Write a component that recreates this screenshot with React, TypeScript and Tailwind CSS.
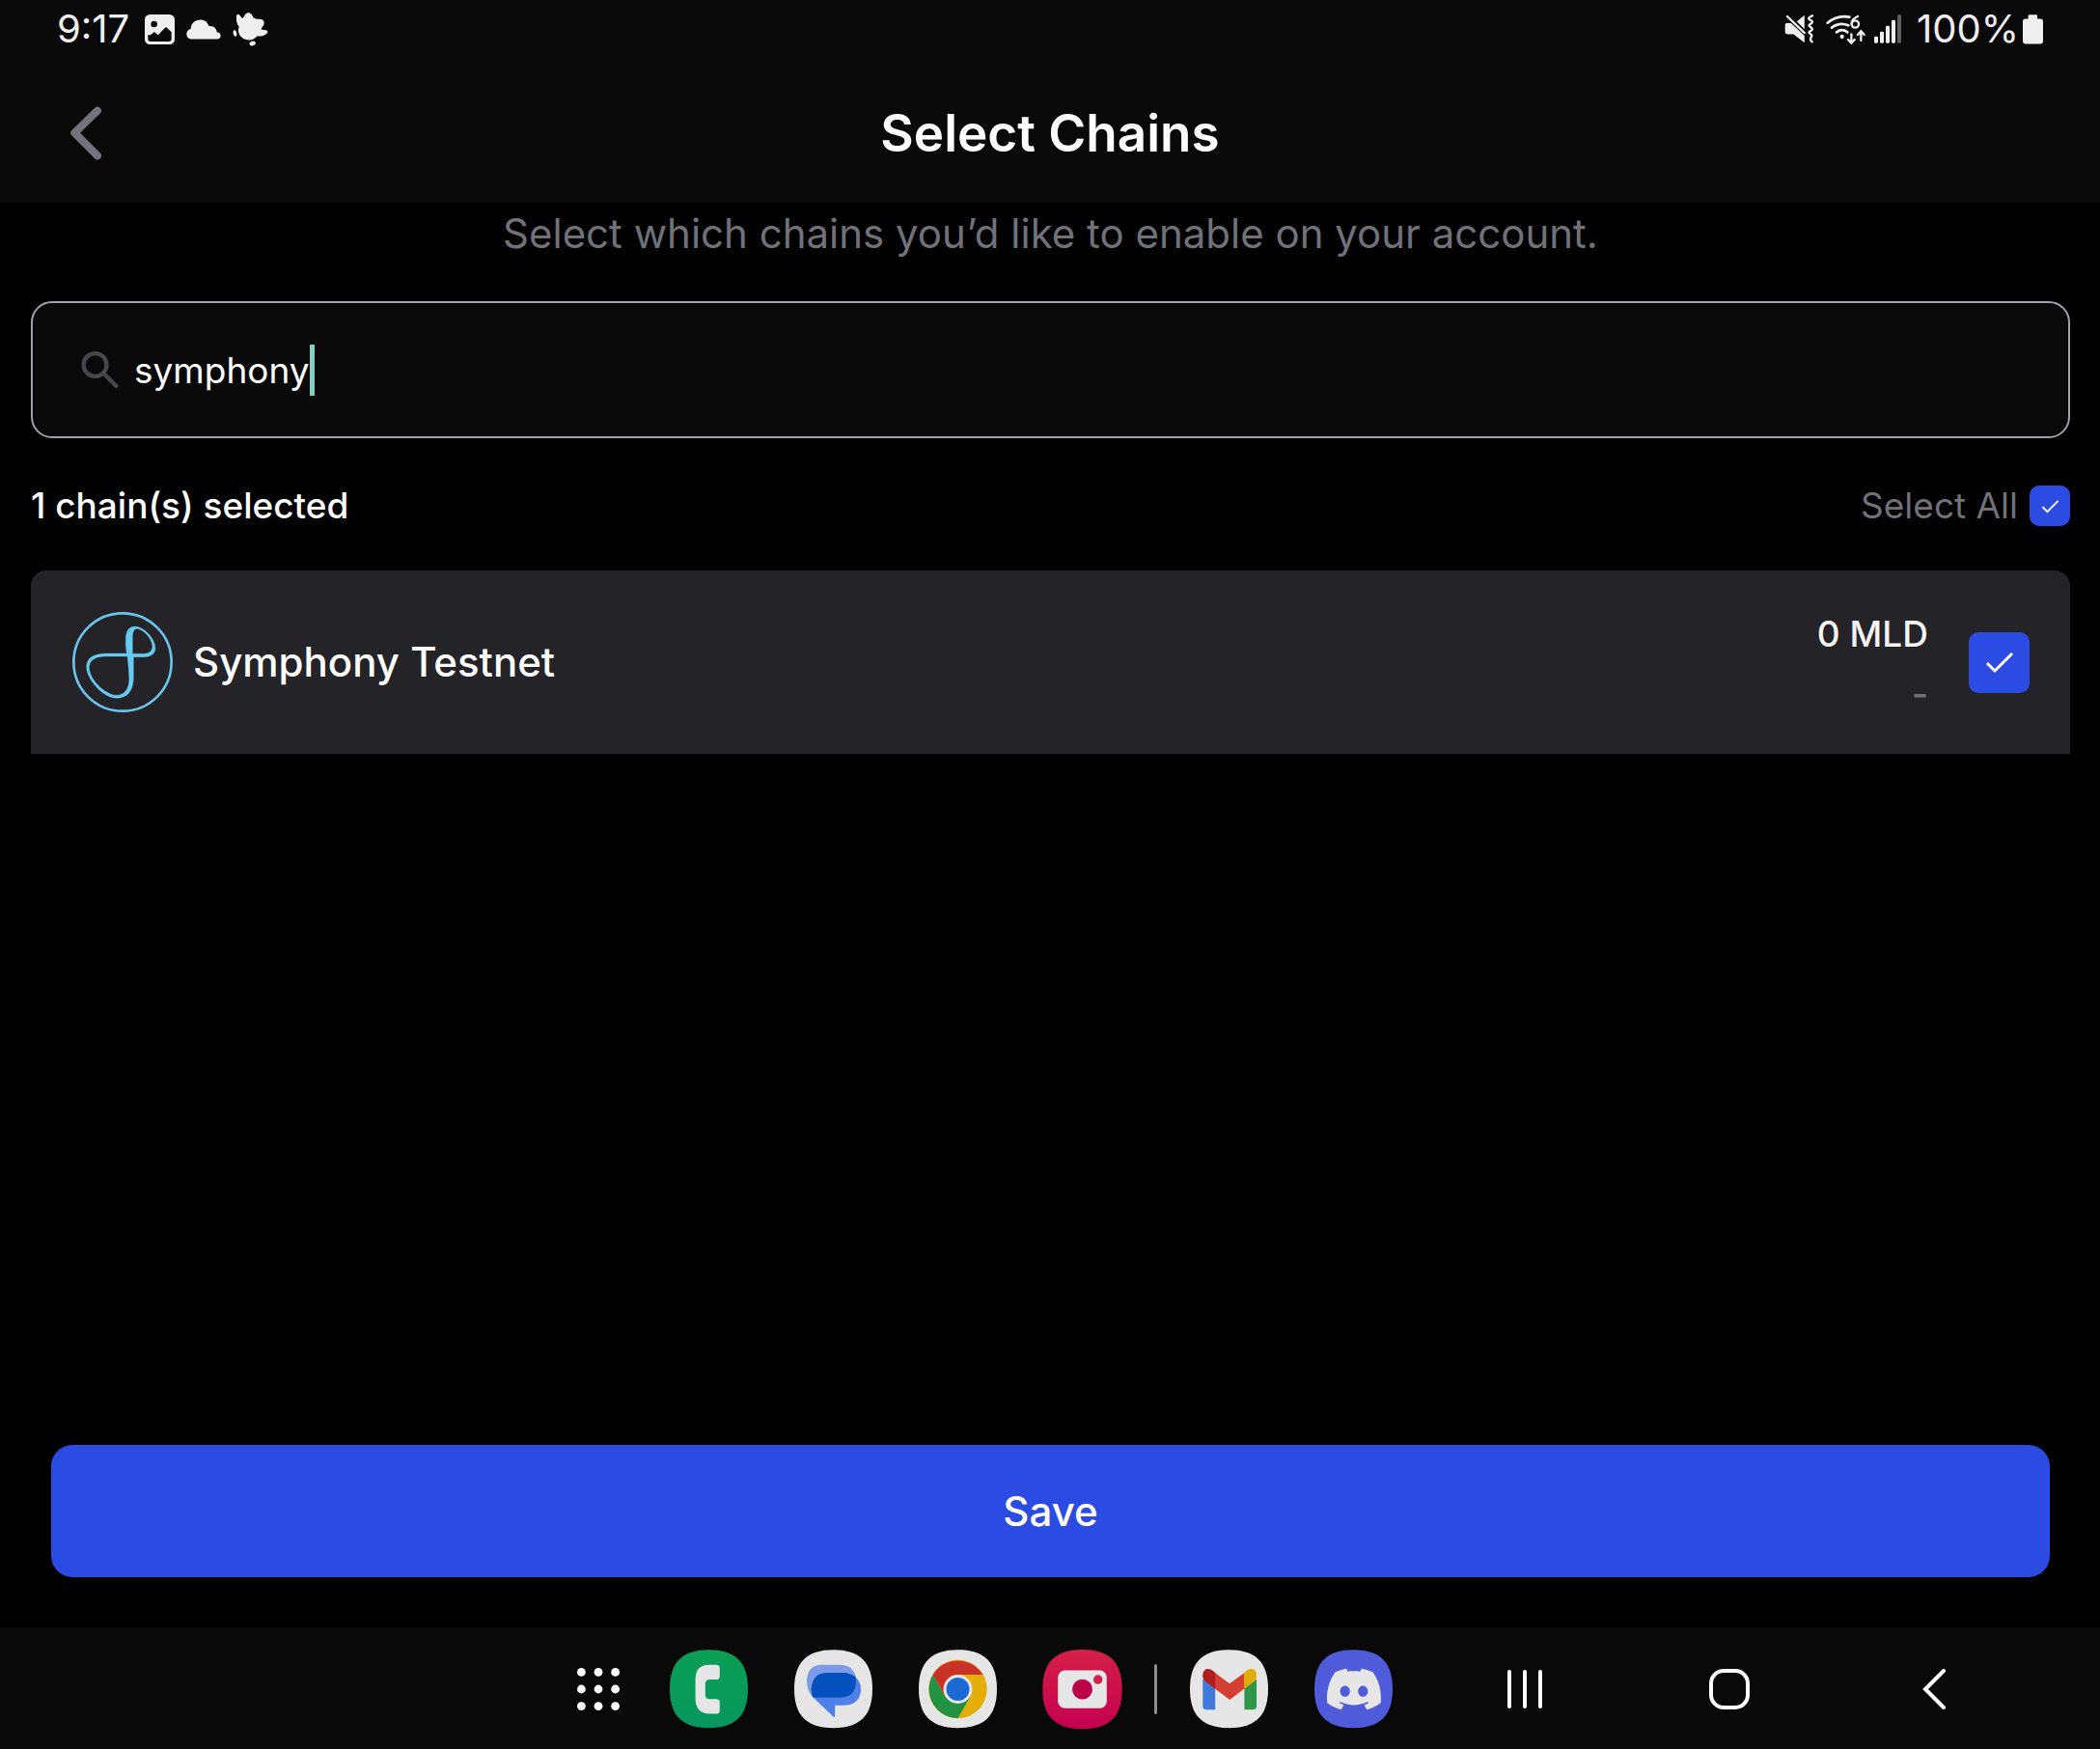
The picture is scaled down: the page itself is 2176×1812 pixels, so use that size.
import React, { useState } from "react";
import { SiDiscord } from "react-icons/si";

const SQUIRCLE = "M122 0C205 0 244 39 244 122S205 244 122 244 0 205 0 122 39 0 122 0Z";

function ImageIcon() {
  return (
    <svg viewBox="330 44 93 93" className="size-[31px]" aria-hidden="true">
      <path
        fill="#efefef"
        fillRule="evenodd"
        d="M346 44h61a16 16 0 0 1 16 16v61a16 16 0 0 1-16 16h-61a16 16 0 0 1-16-16V60a16 16 0 0 1 16-16ZM359 64a10 10 0 1 0 0 20 10 10 0 0 0 0-20ZM340 108v12a8 8 0 0 0 8 8h57a8 8 0 0 0 8-8V99l-14-14q-3-2-6 0l-20 21q-2 2-4 0l-6-6q-3-2-6 0l-7 6q-2 1-2 2Z"
      />
    </svg>
  );
}

function CloudIcon() {
  return (
    <svg viewBox="463 56 109 63" className="h-[21px] w-9" aria-hidden="true">
      <path
        fill="#efefef"
        d="M480 118C469 118 464 110 464 102 464 93 470 87 477 86 478 68 490 57 507 57 521 57 530 65 534 77 548 75 558 84 559 96 567 97 571 102 571 107 571 113 567 118 560 118Z"
      />
    </svg>
  );
}

function SplashIcon() {
  return (
    <svg viewBox="604 38 111 106" className="h-[35px] w-[37px]" aria-hidden="true">
      <g fill="#efefef">
        <path d="M616 47C618 42 623 43 626 47L634 56C637 54 639 52 641 48 644 41 650 38 656 39 663 40 665 48 669 54 675 60 684 58 693 59 702 61 704 68 701 76 699 82 694 86 693 91 699 93 706 92 712 95 715 98 713 103 708 106 700 112 689 113 680 112 675 119 667 124 655 124 638 124 624 113 622 98 621 92 622 88 624 83 616 74 614 58 616 47Z" />
        <ellipse cx="611" cy="103" rx="5.500" ry="10" transform="rotate(-10 611 103)" />
        <ellipse cx="666" cy="135" rx="10" ry="7" transform="rotate(-14 666 135)" />
      </g>
    </svg>
  );
}

function MuteVibrateIcon() {
  return (
    <svg viewBox="62 46 92 91" className="h-[30px] w-[31px]" aria-hidden="true">
      <path fill="#efefef" d="M124 48v44L100 68ZM66 73h16l42 40v22L90 108H72q-9 0-9-9V82q0-7 3-9Z" />
      <path d="M70 52 124 104" fill="none" stroke="#efefef" strokeWidth="7" strokeLinecap="round" />
      <path d="M149 50C134 57 134 60 145 65 152 69 148 73 141 77 135 81 142 85 146 88 152 93 146 96 141 99 135 103 142 107 146 110 152 115 134 121 148 132" fill="none" stroke="#efefef" strokeWidth="7" strokeLinejoin="round" strokeLinecap="round" />
    </svg>
  );
}

function WifiIcon() {
  return (
    <svg viewBox="194 46 126 93" className="h-[31px] w-[42px]" aria-hidden="true">
      <g fill="none" stroke="#efefef" strokeWidth="8" strokeLinecap="round">
        <path d="M199 72Q230 46 267 54" />
        <path d="M212 87Q236 68 264 80" />
        <path d="M227 101Q244 88 261 101" />
        <path d="M293 52Q274 60 274 75" strokeWidth="7" />
        <circle cx="285" cy="76" r="11" strokeWidth="7" />
        <path d="M273 107v27M263 124l10 11 10-11M303 127v-27M293 109l10-11 10 11" strokeWidth="7" />
      </g>
      <circle cx="244" cy="115" r="6.500" fill="#efefef" />
    </svg>
  );
}

function SignalIcon() {
  return (
    <svg viewBox="345 46 84 90" className="h-[30px] w-7" aria-hidden="true">
      <g fill="#efefef">
        <rect x="345" y="114" width="12" height="21" rx="4" />
        <rect x="363" y="99" width="12" height="36" rx="4" />
        <rect x="381" y="81" width="12" height="54" rx="4" />
        <rect x="399" y="63" width="12" height="72" rx="4" />
        <rect x="417" y="47" width="12" height="88" rx="4" fill="#5f5f5f" />
      </g>
    </svg>
  );
}

function BatteryIcon() {
  return (
    <svg viewBox="798 45 64 93" className="h-[31px] w-[21px]" aria-hidden="true">
      <path fill="#efefef" d="M819 45h21q4 0 4 4v9h10q8 0 8 8v62q0 9-9 9h-46q-9 0-9-9V66q0-8 8-8h9v-9q0-4 4-4Z" />
    </svg>
  );
}

function SymphonyLogo() {
  return (
    <svg viewBox="12 15 318 318" className="size-[106px]" aria-hidden="true">
      <circle cx="171" cy="174" r="152" fill="none" stroke="#6cc3ea" strokeWidth="8" />
      <path
        fill="#66caf1"
        stroke="#66caf1"
        strokeWidth="1"
        fillRule="evenodd"
        d="M181 100C182 75 192 63 210 63 240 64 274 104 273 132 272 150 255 158 238 158L205 158 205 215C206 260 190 286 150 286 110 284 58 226 59 188 60 155 90 147 125 147L184 147C181 130 180 115 181 100ZM202 148 202 98C202 78 208 70 216 70 238 74 262 100 264 126 262 142 250 148 235 148ZM186 156 125 156C95 156 70 162 67 188 66 225 112 272 150 277 185 277 194 245 191 215 190 190 188 175 186 156Z"
      />
    </svg>
  );
}

function PhoneApp() {
  return (
    <svg viewBox="0 0 244 246" className="h-[82px] w-[81px]" aria-hidden="true">
      <defs>
        <linearGradient id="phone-bg" x1="0" y1="0" x2="0" y2="1">
          <stop offset="0" stopColor="#0a9e55" />
          <stop offset="1" stopColor="#07965f" />
        </linearGradient>
      </defs>
      <path d={SQUIRCLE} fill="url(#phone-bg)" />
      <path fill="#e6e6e6" d="M123 47h22q11 0 11 11v24q0 11-11 11h-20q-14 0-14 14v33q0 14 14 14h20q11 0 11 11v24q0 11-11 11h-22Q80 197 80 153V93Q80 47 123 47Z" />
    </svg>
  );
}

function MessagesApp() {
  return (
    <svg viewBox="0 0 244 246" className="h-[82px] w-[81px]" aria-hidden="true">
      <path d={SQUIRCLE} fill="#e6e6e6" />
      <path fill="#4f7fe8" d="M102 72h55a51 51 0 0 1 0 101H127v34q0 6-5 2L68 158Q52 142 52 120 55 72 102 72Z" />
      <path fill="#7c9ce8" d="M88 47h54q44 0 52 44 0 58-50 58H58Q39 127 39 97 41 47 88 47Z" />
      <path fill="#4f7fe8" d="M191 86Q208 100 208 122 208 165 165 173H127L90 149h58Q196 143 191 86Z" />
      <path fill="#0450bd" d="M103 72h51q20 0 38 14 6 63-49 63H59Q53 139 53 122 57 72 103 72Z" />
    </svg>
  );
}

function ChromeApp() {
  return (
    <svg viewBox="0 0 244 246" className="h-[82px] w-[81px]" aria-hidden="true">
      <path d={SQUIRCLE} fill="#e6e6e6" />
      <circle cx="122" cy="123" r="91" fill="#e5ae0a" />
      <path fill="#cb3227" d="M44 78A91 91 0 0 1 200 78H122L83 146Z" />
      <path fill="#249243" d="M44 78A91 91 0 0 0 122 214L161 146H83Z" />
      <circle cx="122" cy="123" r="45" fill="#e6e6e6" />
      <circle cx="122" cy="123" r="36" fill="#1b6ad6" />
    </svg>
  );
}

function CameraApp() {
  return (
    <svg viewBox="0 0 244 246" className="h-[83px] w-[83px]" aria-hidden="true">
      <defs>
        <linearGradient id="camera-bg" x1="0" y1="0" x2="0" y2="1">
          <stop offset="0" stopColor="#d42049" />
          <stop offset="1" stopColor="#c40050" />
        </linearGradient>
      </defs>
      <path d={SQUIRCLE} fill="url(#camera-bg)" />
      <rect x="47" y="64" width="150" height="116" rx="21" fill="#e6e6e6" />
      <circle cx="122" cy="122" r="31" fill="#bb0048" />
      <circle cx="170" cy="92" r="14" fill="#d02148" />
    </svg>
  );
}

function GmailApp() {
  return (
    <svg viewBox="0 0 244 246" className="h-[82px] w-[81px]" aria-hidden="true">
      <path d={SQUIRCLE} fill="#e6e6e6" />
      <path fill="#3f7adb" d="M40 92 79 118v69H51q-11 0-11-11Z" />
      <path fill="#2f974a" d="M208 92 170 118v69h27q11 0 11-11Z" />
      <path fill="#d53f33" d="M77 71 124 106 171 71v50L124 156 77 121Z" />
      <path fill="#b01f1e" d="M79 72v50L48 99Q40 93 40 84V78Q42 60 57 60 65 60 71 65Z" />
      <path fill="#e1ac06" d="M169 72v50L200 99Q208 93 208 84V78Q206 60 191 60 183 60 177 65Z" />
    </svg>
  );
}

function DiscordApp() {
  return (
    <span className="grid place-items-center">
      <svg viewBox="0 0 244 246" className="col-start-1 row-start-1 h-[82px] w-[81px]" aria-hidden="true">
        <path d={SQUIRCLE} fill="#505bd9" />
      </svg>
      <SiDiscord className="col-start-1 row-start-1 size-14 text-[#e6e6e6]" aria-hidden="true" />
    </span>
  );
}

type CheckProps = {
  id: string;
  large?: boolean;
  checked: boolean;
  onChange: (next: boolean) => void;
};

function Check({ id, large, checked, onChange }: CheckProps) {
  return (
    <span className="grid place-items-center">
      <input
        id={id}
        type="checkbox"
        checked={checked}
        onChange={(e) => onChange(e.target.checked)}
        className={
          (large ? "size-[63px]" : "size-[42px]") +
          " peer col-start-1 row-start-1 appearance-none rounded-[10px] border-2 border-[#2c4be2] checked:bg-[#2c4be2]"
        }
      />
      <svg
        viewBox="0 0 30 24"
        className={
          (large ? "h-6 w-[30px]" : "h-[15px] w-[19px]") +
          " pointer-events-none invisible col-start-1 row-start-1 peer-checked:visible"
        }
        aria-hidden="true"
      >
        <path d="M2 13 10 21 28 3" fill="none" stroke="#fff" strokeWidth="3" />
      </svg>
    </span>
  );
}

const dock = [
  { name: "Phone", icon: <PhoneApp /> },
  { name: "Messages", icon: <MessagesApp /> },
  { name: "Chrome", icon: <ChromeApp /> },
  { name: "Camera", icon: <CameraApp /> },
];

const recent = [
  { name: "Gmail", icon: <GmailApp /> },
  { name: "Discord", icon: <DiscordApp /> },
];

function DockButton({ name, children }: { name: string; children: React.ReactNode }) {
  return (
    <button type="button" aria-label={name} className="flex w-[129px] items-center justify-center">
      {children}
    </button>
  );
}

export default function App() {
  const [query, setQuery] = useState("symphony");
  const [selected, setSelected] = useState(true);

  return (
    <div className="flex min-h-screen flex-col bg-black font-[Inter,sans-serif] text-white">
      <header className="bg-[#090909]">
        <div className="flex h-[60px] items-center justify-between px-[59px] text-[40px] leading-[60px] text-[#efefef]">
          <div className="flex items-center">
            <span>9:17</span>
            <span className="ml-4 flex items-center gap-3">
              <ImageIcon />
              <CloudIcon />
              <SplashIcon />
            </span>
          </div>
          <div className="flex items-center">
            <MuteVibrateIcon />
            <span className="ml-3">
              <WifiIcon />
            </span>
            <span className="ml-2">
              <SignalIcon />
            </span>
            <span className="ml-4">100%</span>
            <span className="ml-1">
              <BatteryIcon />
            </span>
          </div>
        </div>
        <div className="grid h-[150px] grid-cols-[1fr_auto_1fr] items-start px-[73px] pt-[46px]">
          <button type="button" aria-label="Back" className="flex h-16 w-10 items-center">
            <svg viewBox="100 330 96 168" className="h-14 w-8" aria-hidden="true">
              <path d="M184 344 113 413 184 484" fill="none" stroke="#71757b" strokeWidth="24" strokeLinecap="round" strokeLinejoin="round" />
            </svg>
          </button>
          <h1 className="text-[53px] leading-[64px] font-semibold">Select Chains</h1>
        </div>
      </header>

      <main className="flex flex-1 flex-col pr-[31px] pl-8">
        <p className="text-center text-[42px] leading-[64px] font-normal text-[#717179]">
          Select which chains you’d like to enable on your account.
        </p>

        <label className="mt-[38px] flex h-[142px] items-center rounded-[22px] border-2 border-[#a1a1aa] bg-[#090909] pl-[50px]">
          <svg viewBox="190 187 118 120" className="h-10 w-[39px]" aria-hidden="true">
            <g fill="none" stroke="#46464b" strokeWidth="13">
              <circle cx="234" cy="232" r="36" />
              <path d="M259 257 304 302" />
            </g>
          </svg>
          <input
            type="text"
            aria-label="Search chains"
            value={query}
            onChange={(e) => setQuery(e.target.value)}
            className="ml-4 h-[60px] [field-sizing:content] bg-transparent text-[37px] caret-[#84cdc4] outline-none"
          />
          <span className="h-[53px] w-[5px] bg-[#84cdc4]" />
        </label>

        <div className="mt-[47px] flex h-[46px] items-center justify-between text-[37px] leading-[46px]">
          <p className="font-medium">{selected ? 1 : 0} chain(s) selected</p>
          <div className="flex items-center gap-3">
            <label htmlFor="select-all" className="text-[#717179]">
              Select All
            </label>
            <Check id="select-all" checked={selected} onChange={setSelected} />
          </div>
        </div>

        <ul className="mt-11">
          <li className="flex h-[190px] items-center rounded-t-2xl bg-[#242428] px-[42px]">
            <SymphonyLogo />
            <label htmlFor="symphony" className="ml-5 text-[42px] leading-[50px] font-medium">
              Symphony Testnet
            </label>
            <div className="ml-auto flex flex-col gap-4 pt-[3px] text-right text-[37px] leading-[46px] font-medium">
              <span className="text-[#f4f4f5]">0 MLD</span>
              <span className="text-[#717179]">-</span>
            </div>
            <span className="ml-[42px]">
              <Check id="symphony" large checked={selected} onChange={setSelected} />
            </span>
          </li>
        </ul>

        <button
          type="button"
          className="mx-[21px] mt-auto mb-[52px] h-[137px] rounded-[22px] bg-[#2c4be2] text-[42px] font-medium"
        >
          Save
        </button>
      </main>

      <nav aria-label="Taskbar" className="flex h-[126px] items-center justify-end bg-[#090909] pt-[2px] pr-[66px]">
        <button type="button" aria-label="All apps" className="flex w-[100px] items-center justify-center">
          <svg viewBox="0 0 130 130" className="size-11" aria-hidden="true">
            <g fill="#fff">
              {[13, 65, 117].map((y) =>
                [13, 65, 117].map((x) => <circle key={`${x}-${y}`} cx={x} cy={y} r="13" />)
              )}
            </g>
          </svg>
        </button>
        {dock.map((app) => (
          <DockButton key={app.name} name={app.name}>
            {app.icon}
          </DockButton>
        ))}
        <span className="mx-[10px] h-[52px] w-[3px] rounded-full bg-[#8f8f8f]" />
        {recent.map((app) => (
          <DockButton key={app.name} name={app.name}>
            {app.icon}
          </DockButton>
        ))}
        <button type="button" aria-label="Recents" className="ml-[7px] flex w-[212px] items-center justify-center">
          <svg viewBox="0 0 38 42" className="h-[42px] w-[38px]" aria-hidden="true">
            <path d="M3 3V39M19 3V39M35 3V39" stroke="#fff" strokeWidth="4" strokeLinecap="round" />
          </svg>
        </button>
        <button type="button" aria-label="Home" className="flex w-[212px] items-center justify-center">
          <svg viewBox="0 0 42 42" className="size-[42px]" aria-hidden="true">
            <rect x="2" y="2" width="38" height="38" rx="13" fill="none" stroke="#fff" strokeWidth="4" />
          </svg>
        </button>
        <button type="button" aria-label="Back" className="flex w-[212px] items-center justify-center">
          <svg viewBox="0 0 24 42" className="h-[42px] w-6" aria-hidden="true">
            <path d="M22 2 3 21 22 40" fill="none" stroke="#fff" strokeWidth="4" strokeLinecap="round" />
          </svg>
        </button>
      </nav>
    </div>
  );
}
